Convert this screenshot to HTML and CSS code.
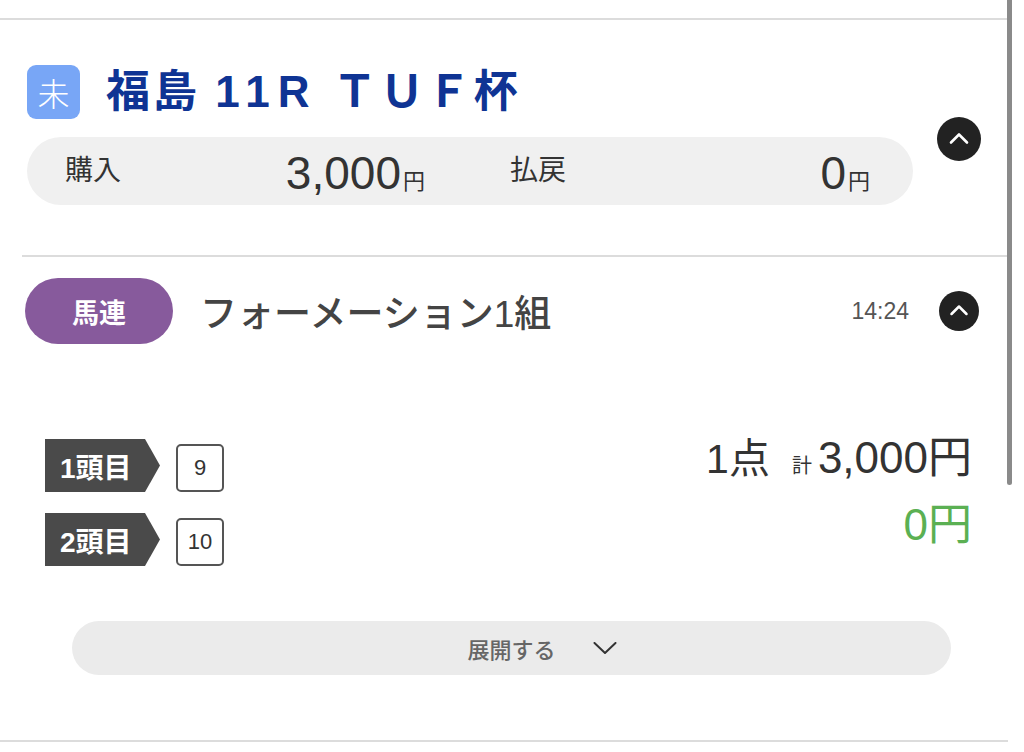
FILE: index.html
```html
<!DOCTYPE html>
<html lang="ja">
<head>
<meta charset="utf-8">
<title>福島 11R TUF杯</title>
<link rel="stylesheet" href="styles.css">
</head>
<body>
<div class="page">
  <div class="rule rule-full"></div>

  <section class="race">
    <div class="race-main">
      <div class="title-row">
        <span class="badge">未</span>
        <h1 class="title">福島 <span class="title-lat">11R</span> ＴＵＦ杯</h1>
      </div>
      <div class="summary">
        <div class="sum-cell">
          <span class="sum-label">購入</span>
          <span class="sum-value">3,000<small>円</small></span>
        </div>
        <div class="sum-cell">
          <span class="sum-label">払戻</span>
          <span class="sum-value">0<small>円</small></span>
        </div>
      </div>
    </div>
    <button class="circle-btn circle-lg" type="button" aria-label="閉じる">
      <svg viewBox="0 0 44 44" width="44" height="44"><path d="M14 25.5 L22 17.5 L30 25.5" fill="none" stroke="#fff" stroke-width="2.6" stroke-linecap="round" stroke-linejoin="round"/></svg>
    </button>
  </section>

  <div class="rule rule-inset"></div>

  <section class="bet">
    <div class="bet-head">
      <span class="bet-type">馬連</span>
      <span class="bet-name">フォーメーション1組</span>
      <span class="bet-time">14:24</span>
      <button class="circle-btn circle-sm" type="button" aria-label="閉じる">
        <svg viewBox="0 0 40 40" width="40" height="40"><path d="M12.5 23 L20 15.5 L27.5 23" fill="none" stroke="#fff" stroke-width="2.5" stroke-linecap="round" stroke-linejoin="round"/></svg>
      </button>
    </div>

    <div class="bet-body">
      <div class="picks">
        <div class="pick-row">
          <span class="pick-tag">1頭目</span>
          <span class="pick-num">9</span>
        </div>
        <div class="pick-row">
          <span class="pick-tag">2頭目</span>
          <span class="pick-num">10</span>
        </div>
      </div>
      <div class="totals">
        <div class="total-line"><span class="pts">1点</span><span class="kei">計</span><span class="amt">3,000円</span></div>
        <div class="total-line payout">0円</div>
      </div>
    </div>

    <div class="expand">
      <span class="expand-text">展開する</span>
      <svg class="expand-chev" viewBox="0 0 24 12" width="24" height="12"><path d="M1.5 1 L12 11 L22.5 1" fill="none" stroke="#333" stroke-width="2" stroke-linecap="round" stroke-linejoin="round"/></svg>
    </div>
  </section>

  <div class="rule rule-full rule-bottom"></div>

  <div class="scrollbar"></div>
</div>
</body>
</html>
```

FILE: styles.css
```css
* { box-sizing: border-box; }

html, body {
  margin: 0;
  padding: 0;
  background: #fff;
}

body {
  font-family: "Liberation Sans", "Noto Sans CJK JP", sans-serif;
  color: #333;
}

.page {
  position: relative;
  width: 1024px;
  height: 752px;
  overflow: hidden;
}

.rule {
  height: 2px;
  background: #dcdcdc;
}

.rule-full {
  margin-top: 18px;
  width: 1008px;
}

.rule-inset {
  margin-top: 50px;
  margin-left: 22px;
  width: 988px;
}

.rule-bottom {
  margin-top: 65px;
}

/* race header */
.race {
  display: flex;
  align-items: center;
  padding: 45px 0 0 27px;
}

.race-main {
  width: 886px;
}

.title-row {
  display: flex;
  align-items: center;
  gap: 26px;
  height: 54px;
}

.badge {
  width: 53px;
  height: 54px;
  border-radius: 9px;
  background: #78a6f6;
  color: #fff;
  font-family: "Noto Sans CJK JP", sans-serif;
  font-size: 32px;
  font-weight: 300;
  display: flex;
  align-items: center;
  justify-content: center;
  line-height: 1;
}

.title {
  margin: 0;
  font-size: 44px;
  font-weight: 700;
  color: #0f3494;
  letter-spacing: 3px;
  line-height: 54px;
  white-space: nowrap;
}

.title-lat {
  letter-spacing: 8px;
}

.summary {
  margin-top: 18px;
  height: 68px;
  border-radius: 34px;
  background: #f0f0f0;
  display: grid;
  grid-template-columns: 360px 360px;
  column-gap: 85px;
  padding: 0 43px 0 38px;
  align-items: center;
}

.sum-cell {
  display: flex;
  align-items: center;
  justify-content: space-between;
}

.sum-label {
  font-size: 28px;
  color: #333;
  line-height: 1;
}

.sum-value {
  font-size: 46px;
  color: #333;
  line-height: 1;
  margin-top: 4px;
}

.sum-value small {
  font-size: 22px;
  margin-left: 2px;
}

.circle-btn {
  border: 0;
  padding: 0;
  border-radius: 50%;
  background: #222;
  display: flex;
  align-items: center;
  justify-content: center;
  flex: none;
}

.circle-lg {
  width: 44px;
  height: 44px;
  margin-left: 24px;
  margin-top: 8px;
}

.circle-sm {
  width: 40px;
  height: 40px;
  margin-left: 30px;
}

/* bet section */
.bet {
  width: 1010px;
}

.bet-head {
  display: flex;
  align-items: center;
  margin-top: 21px;
  padding: 0 31px 0 25px;
  height: 66px;
}

.bet-type {
  width: 148px;
  height: 66px;
  border-radius: 33px;
  background: #875a9c;
  color: #fff;
  font-size: 27px;
  font-weight: 700;
  display: flex;
  align-items: center;
  justify-content: center;
}

.bet-name {
  margin-left: 27px;
  font-size: 37px;
  font-weight: 500;
  color: #444;
  flex: 1;
}

.bet-time {
  font-size: 23px;
  color: #555;
}

.bet-body {
  display: flex;
  justify-content: space-between;
  align-items: flex-start;
  margin-top: 89px;
  padding: 0 38px 0 45px;
}

.picks {
  margin-top: 6px;
  display: flex;
  flex-direction: column;
  gap: 21px;
}

.pick-row {
  display: flex;
  align-items: flex-end;
}

.pick-tag {
  width: 115px;
  height: 53px;
  background: #4a4a4a;
  color: #fff;
  font-size: 28px;
  font-weight: 700;
  display: flex;
  align-items: center;
  padding-left: 15px;
  clip-path: polygon(0 0, 100px 0, 115px 50%, 100px 100%, 0 100%);
}

.pick-num {
  margin-left: 16px;
  width: 48px;
  height: 48px;
  border: 2px solid #555;
  border-radius: 5px;
  font-size: 22px;
  color: #333;
  display: flex;
  align-items: center;
  justify-content: center;
}

.totals {
  display: flex;
  flex-direction: column;
  align-items: flex-end;
  gap: 17px;
}

.total-line {
  display: flex;
  align-items: baseline;
  height: 50px;
  line-height: 50px;
  font-size: 44px;
  color: #333;
}

.pts {
  font-size: 41px;
}

.kei {
  font-size: 20px;
  margin-left: 22px;
  margin-right: 6px;
}

.payout {
  color: #5bb053;
}

.expand {
  margin: 55px 0 0 72px;
  width: 879px;
  height: 54px;
  border-radius: 27px;
  background: #ebebeb;
  display: flex;
  align-items: center;
  justify-content: center;
  padding-left: 61px;
}

.expand-text {
  font-size: 22px;
  font-weight: 500;
  color: #666;
}

.expand-chev {
  margin-left: 37px;
}

.scrollbar {
  position: absolute;
  left: 1007px;
  top: -4px;
  width: 5px;
  height: 489px;
  border-radius: 3px;
  background: #8a8a8a;
}
```
